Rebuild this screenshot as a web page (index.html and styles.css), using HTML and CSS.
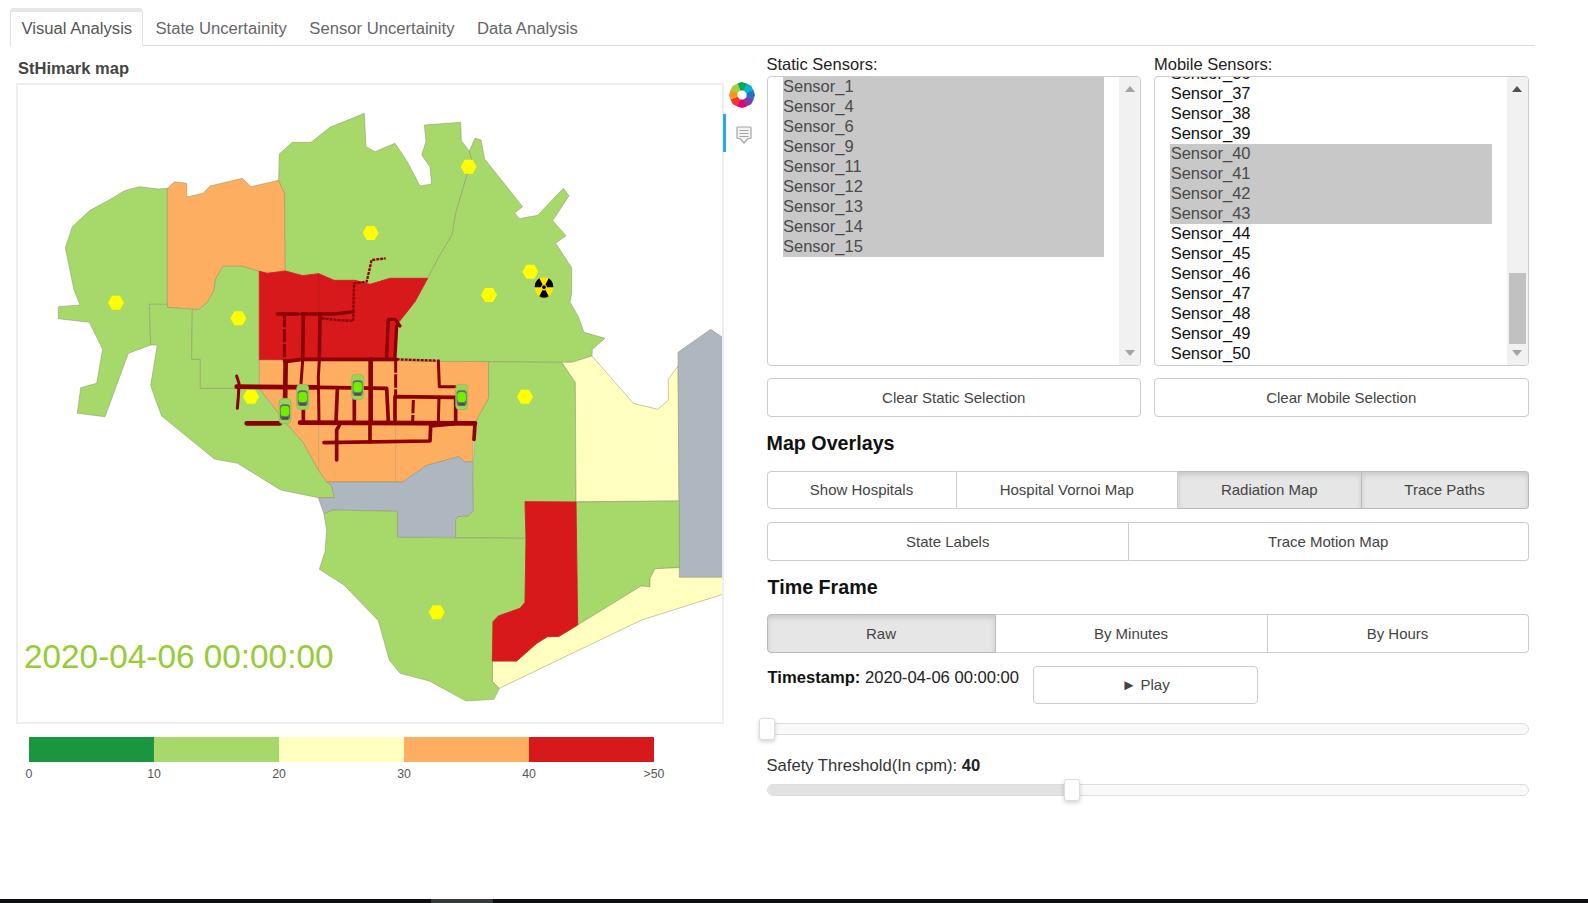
FILE: index.html
```html
<!DOCTYPE html>
<html lang="en">
<head>
<meta charset="utf-8">
<title>StHimark</title>
<link rel="stylesheet" href="styles.css">
</head>
<body>
<div class="page">
  <nav class="tabs">
    <a class="tab active">Visual Analysis</a>
    <a class="tab">State Uncertainity</a>
    <a class="tab">Sensor Uncertainity</a>
    <a class="tab">Data Analysis</a>
  </nav>
  <div class="content">
    <section class="left">
      <h4 class="map-title">StHimark map</h4>
      <div class="map-row">
        <div class="map-frame">
          <svg class="map" viewBox="54 255 2112 1911" width="704" height="637" xmlns="http://www.w3.org/2000/svg">
            <defs>
              <polygon id="hex" points="-24,0 -12,-21 12,-21 24,0 12,21 -12,21"/>
              <g id="car">
                <rect class="car-body" x="-18" y="-38" width="36" height="76" rx="12"/>
                <rect class="car-dark" x="-15" y="-20" width="30" height="47" rx="10"/>
                <rect class="car-lime" x="-13" y="-15" width="26" height="31" rx="10"/>
                <rect class="car-glass" x="-9" y="18" width="18" height="7" rx="2"/>
              </g>
              <path id="blade" d="M4 6.9L13 22.5A26 26 0 0 1-13 22.5L-4 6.9A8 8 0 0 0 4 6.9Z"/>
            </defs>
            <polygon class="r green" points="502,565 475,567 418,560 374,572 322,603 270,631 217,680 196,743 222,870 240,915 175,920 175,956 268,967 308,1048 290,1150 242,1163 232,1240 315,1250 385,1060 452,1035 448,913 502,913"/>
            <polygon class="r orange" points="502,565 524,545 560,550 560,591 609,580 630,558 727,535 753,560 836,541 854,580 856,813 802,820 778,814 727,799 669,799 647,837 642,872 622,907 597,928 577,928 502,922"/>
            <polygon class="r green" points="448,913 502,913 502,922 577,928 575,1077 601,1078 601,1165 778,1165 855,1265 910,1328 955,1410 995,1458 1003,1493 955,1493 842,1470 713,1390 643,1377 485,1248 467,1200 452,1156 472,1035 452,1035"/>
            <polygon class="r green" points="577,928 597,928 622,907 642,872 647,837 669,799 727,799 778,814 778,1165 601,1165 601,1078 575,1077"/>
            <polygon class="r green" points="838,462 877,427 933,427 990,382 1093,340 1098,440 1125,455 1185,430 1222,485 1260,558 1295,552 1290,500 1265,465 1278,425 1273,375 1382,367 1384,422 1408,453 1415,480 1402,522 1367,640 1357,703 1320,765 1283,835 1170,835 1110,853 1065,841 1002,841 956,821 908,827 856,813 854,580 836,541"/>
            <polygon class="r green" points="1425,415 1443,420 1454,477 1568,620 1544,638 1557,656 1613,646 1690,565 1707,587 1658,662 1698,707 1667,730 1715,803 1715,880 1710,906 1735,950 1752,997 1815,1015 1777,1048 1776,1068 1715,1087 1182,1085 1188,1040 1190,972 1200,962 1245,905 1283,835 1320,765 1357,703 1367,640 1402,522 1415,480 1408,453"/>
            <polygon class="r red" points="778,814 802,820 856,813 908,827 956,821 1002,841 1065,841 1110,853 1170,835 1283,835 1245,905 1200,962 1190,972 1182,1080 778,1080"/>
            <polygon class="r orange" points="778,1080 1466,1085 1466,1195 1432,1260 1420,1320 1418,1386 1395,1386 1375,1370 1278,1397 1208,1446 980,1446 955,1410 910,1328 855,1265 778,1165"/>
            <polygon class="r grey" points="955,1493 1003,1493 995,1458 980,1446 1208,1446 1278,1397 1375,1370 1395,1386 1418,1386 1420,1535 1405,1548 1375,1550 1367,1560 1367,1612 1192,1612 1192,1534 998,1530 972,1542"/>
            <polygon class="r green" points="1466,1085 1685,1087 1726,1147 1728,1505 1575,1505 1578,1615 1367,1613 1367,1560 1375,1550 1405,1548 1420,1533 1420,1386 1427,1265 1466,1195"/>
            <polygon class="r yellow" points="1685,1087 1715,1087 1776,1068 1900,1210 1973,1228 2005,1200 2005,1138 2034,1098 2038,1503 1728,1505 1726,1147"/>
            <polygon class="r grey" points="2034,1057 2132,988 2168,1012 2168,1732 2038,1732"/>
            <polygon class="r green" points="1728,1506 2038,1503 2038,1703 1965,1706 1950,1735 1950,1760 1923,1758 1733,1875"/>
            <polygon class="r yellow" points="1477,1983 1550,1983 1610,1930 1642,1910 1677,1909 1733,1875 1923,1758 1950,1760 1950,1735 1965,1706 2038,1703 2038,1732 2168,1732 2168,1783 1925,1860 1498,2065 1477,2045"/>
            <polygon class="r green" points="972,1542 998,1530 1192,1534 1192,1612 1578,1615 1575,1807 1560,1825 1495,1848 1479,1865 1477,1983 1477,2045 1498,2065 1482,2098 1398,2103 1288,2043 1200,2020 1168,1980 1135,1862 1032,1755 958,1708 975,1655 980,1590"/>
            <polygon class="r red" points="1575,1505 1728,1506 1733,1875 1677,1909 1642,1910 1610,1930 1550,1983 1477,1983 1479,1865 1495,1848 1560,1825 1575,1807 1578,1615"/>
            <path class="divider-red" d="M956 821V1080"/>
            <path class="divider" d="M956 1270V1410M1187 1270V1446"/>
            <use class="hex" href="#hex" x="348" y="908"/>
            <use class="hex" href="#hex" x="715" y="955"/>
            <use class="hex" href="#hex" x="1112" y="699"/>
            <use class="hex" href="#hex" x="1406" y="500"/>
            <use class="hex" href="#hex" x="1591" y="815"/>
            <use class="hex" href="#hex" x="1467" y="885"/>
            <use class="hex" href="#hex" x="1575" y="1190"/>
            <use class="hex" href="#hex" x="753" y="1190"/>
            <use class="hex" href="#hex" x="1310" y="1837"/>
            <g class="radiation" transform="translate(1632 862) scale(1.08 1.2)">
              <circle class="rad-disc" r="26"/>
              <use href="#blade"/>
              <use href="#blade" transform="rotate(120)"/>
              <use href="#blade" transform="rotate(240)"/>
              <circle r="5"/>
            </g>
            <g class="roads" transform="translate(660 720)">
              <path class="rd7" d="M172 222H235M245 222H345L400 215"/>
              <path class="rd-dash" d="M400 215L402 130L440 125L455 60L497 55"/>
              <path class="rd-dash" d="M305 235L350 240L400 243V215"/>
              <path class="rd-dash6" d="M193 222V365"/>
              <path class="rd8" d="M250 222L248 360M300 222L298 360"/>
              <path class="rd7" d="M500 350L505 238H525L540 258M530 258L525 350"/>
              <path class="rd8" d="M195 365L245 358H530"/>
              <path class="rd-dash" d="M530 358L650 362"/>
              <path class="rd6" d="M655 362L658 440H705"/>
              <path class="rd10" d="M197 365L195 500"/>
              <path class="rd6" d="M248 362L243 430M298 362L295 410L297 545"/>
              <path class="rd10" d="M452 358V545"/>
              <path class="rd-dash6" d="M527 358V465"/>
              <path class="rd10" d="M50 440L295 442"/>
              <path class="rd8" d="M295 442L500 445L505 545"/>
              <path class="rd6" d="M50 408L57 430L55 470L52 505"/>
              <path class="rd10" d="M80 550H180M240 548L765 550"/>
              <path class="rd8" d="M765 550L762 598"/>
              <path class="rd8" d="M525 545V470L705 472"/>
              <path class="rd-dash6" d="M580 480L578 545"/>
              <path class="rd6" d="M657 472L655 545"/>
              <path class="rd8" d="M707 472V548M250 505V548M352 450L348 545M403 445V550"/>
              <path class="rd8" d="M312 608L630 603L632 558L700 552"/>
              <path class="rd8" d="M350 660V570L358 556M450 550V605"/>
            </g>
            <use href="#car" x="855" y="1233"/>
            <use href="#car" x="908" y="1191"/>
            <use href="#car" x="1073" y="1161"/>
            <use href="#car" x="1385" y="1191"/>
            <text class="stamp" x="72" y="2003">2020-04-06 00:00:00</text>
          </svg>
        </div>
        <aside class="toolbar">
          <svg class="logo" viewBox="-13 -13 26 26" width="26" height="26" xmlns="http://www.w3.org/2000/svg">
            <defs><path id="petal" d="M-1.900-4.600L-4.800-11.500L0-13L5.200-11.200L2.200-4.400Z"/></defs>
            <use class="p1" href="#petal"/>
            <use class="p2" href="#petal" transform="rotate(45)"/>
            <use class="p3" href="#petal" transform="rotate(90)"/>
            <use class="p4" href="#petal" transform="rotate(135)"/>
            <use class="p5" href="#petal" transform="rotate(180)"/>
            <use class="p6" href="#petal" transform="rotate(225)"/>
            <use class="p7" href="#petal" transform="rotate(270)"/>
            <use class="p8" href="#petal" transform="rotate(315)"/>
          </svg>
          <div class="tool-active">
            <svg class="hover-icon" viewBox="0 0 16 18" width="16" height="18" xmlns="http://www.w3.org/2000/svg">
              <path class="hover-shape" d="M2 1h12a1 1 0 0 1 1 1v10l-3.500 1-3.500 4-3.500-4-3.500-1v-10a1 1 0 0 1 1-1z"/>
              <path class="hover-lines" d="M3.500 4.500h9M3.500 7.500h9M3.500 10.500h9"/>
            </svg>
          </div>
        </aside>
      </div>
      <div class="legend">
        <div class="legend-bar">
          <span class="seg s1"></span><span class="seg s2"></span><span class="seg s3"></span><span class="seg s4"></span><span class="seg s5"></span>
        </div>
        <div class="legend-labels">
          <span>0</span><span>10</span><span>20</span><span>30</span><span>40</span><span>&gt;50</span>
        </div>
      </div>
    </section>
    <section class="right">
      <div class="sensors">
        <div class="sensor-col">
          <label class="field-label">Static Sensors:</label>
          <div class="listbox">
            <div class="list">
              <div class="opt sel">Sensor_1</div>
              <div class="opt sel">Sensor_4</div>
              <div class="opt sel">Sensor_6</div>
              <div class="opt sel">Sensor_9</div>
              <div class="opt sel">Sensor_11</div>
              <div class="opt sel">Sensor_12</div>
              <div class="opt sel">Sensor_13</div>
              <div class="opt sel">Sensor_14</div>
              <div class="opt sel">Sensor_15</div>
            </div>
            <div class="scrollbar">
              <span class="arrow up off"></span>
              <span class="arrow down off"></span>
            </div>
          </div>
          <button class="btn clear">Clear Static Selection</button>
        </div>
        <div class="sensor-col">
          <label class="field-label">Mobile Sensors:</label>
          <div class="listbox">
            <div class="list scrolled">
              <div class="opt">Sensor_36</div>
              <div class="opt">Sensor_37</div>
              <div class="opt">Sensor_38</div>
              <div class="opt">Sensor_39</div>
              <div class="opt sel">Sensor_40</div>
              <div class="opt sel">Sensor_41</div>
              <div class="opt sel">Sensor_42</div>
              <div class="opt sel">Sensor_43</div>
              <div class="opt">Sensor_44</div>
              <div class="opt">Sensor_45</div>
              <div class="opt">Sensor_46</div>
              <div class="opt">Sensor_47</div>
              <div class="opt">Sensor_48</div>
              <div class="opt">Sensor_49</div>
              <div class="opt">Sensor_50</div>
            </div>
            <div class="scrollbar">
              <span class="arrow up"></span>
              <span class="thumb"></span>
              <span class="arrow down"></span>
            </div>
          </div>
          <button class="btn clear">Clear Mobile Selection</button>
        </div>
      </div>
      <h4 class="section-title overlays">Map Overlays</h4>
      <div class="group g1">
        <button class="btn">Show Hospitals</button>
        <button class="btn">Hospital Vornoi Map</button>
        <button class="btn on">Radiation Map</button>
        <button class="btn on">Trace Paths</button>
      </div>
      <div class="group g2">
        <button class="btn">State Labels</button>
        <button class="btn">Trace Motion Map</button>
      </div>
      <h4 class="section-title timeframe">Time Frame</h4>
      <div class="group g3">
        <button class="btn on">Raw</button>
        <button class="btn">By Minutes</button>
        <button class="btn">By Hours</button>
      </div>
      <div class="time-row">
        <div class="timestamp"><b>Timestamp:</b> 2020-04-06 00:00:00</div>
        <button class="btn play">► Play</button>
      </div>
      <div class="slider first"><span class="handle at-start"></span></div>
      <div class="threshold">Safety Threshold(In cpm): <b>40</b></div>
      <div class="slider"><span class="fill"></span><span class="handle at-40"></span></div>
    </section>
  </div>
  <div class="taskbar"><span class="task-item"></span></div>
</div>
</body>
</html>
```

FILE: styles.css
```css
* { box-sizing: border-box; }
html, body { margin: 0; padding: 0; background: #fff; }
body { font-family: "Liberation Sans", Arial, sans-serif; font-size: 16.6px; color: #222; }
.page { width: 1588px; height: 903px; overflow: hidden; display: flex; flex-direction: column; }

/* tabs */
.tabs { display: flex; height: 46px; margin-left: 10px; width: 1525px; padding-top: 8px; border-bottom: 1px solid #ddd; flex: none; }
.tab { height: 38px; padding: 0 11.250px; font-size: 16.650px; line-height: 42px; color: #666; }
.tab.active { padding: 0 10px 0 10.500px; margin-right: 1px; color: #555; background: #fff; border: 1px solid #e2e2e2; border-top: 4px solid #e6e6e6; border-bottom: 0; border-radius: 4px 4px 0 0; line-height: 33px; height: 38px; margin-bottom: -1px; }

.content { display: grid; grid-template-columns: 766.500px 762px; flex: none; }

/* left */
.left { padding: 12px 0 0 16px; }
.map-title { margin: 0 0 5px 2px; height: 20px; font-size: 16.500px; line-height: 20px; font-weight: bold; color: #444; }
.map-row { display: flex; }
.map-frame { width: 708px; height: 641px; border: 2px solid #eee; flex: none; overflow: hidden; }
.map { display: block; }
.r { stroke: #8f8f68; stroke-opacity: .6; stroke-width: 2.500; stroke-linejoin: round; }
.green { fill: #a6d96a; }
.orange { fill: #fdae61; }
.red { fill: #d7191c; stroke: #d7191c; stroke-opacity: 1; }
.yellow { fill: #ffffbf; }
.grey { fill: #aeb7c0; }
.divider { fill: none; stroke: #b09a70; stroke-width: 2; stroke-opacity: .8; }
.divider-red { fill: none; stroke: #b5171a; stroke-width: 2; }
.hex { fill: #ffff00; }
.radiation { fill: #000; }
.radiation .rad-disc { fill: #ffe600; }
.roads path { fill: none; stroke: #8b0000; stroke-linecap: round; stroke-linejoin: round; }
.roads .rd6 { stroke-width: 9; }
.roads .rd7 { stroke-width: 10; }
.roads .rd8 { stroke-width: 11; }
.roads .rd10 { stroke-width: 14; }
.roads .rd-dash { stroke-width: 7; stroke-dasharray: 9 3; stroke-linecap: butt; }
.roads .rd-dash6 { stroke-width: 9; stroke-dasharray: 40 5; stroke-linecap: butt; }
.car-body { fill: #9ad35a; stroke: #86bb50; stroke-width: 2; }
.car-dark { fill: #666b6e; }
.car-lime { fill: #70ee00; }
.car-glass { fill: #4d5052; }
.stamp { font-family: "Liberation Sans", Arial, sans-serif; font-size: 100px; fill: #97cb37; }

.toolbar { width: 36px; flex: none; display: flex; flex-direction: column; }
.logo { display: block; margin: -1px 0 0 5px; }
.tool-active { width: 36px; height: 38px; margin-top: 6px; border-left: 3px solid #26aae1; padding: 12px 0 0 10px; margin-left: -1px; }
.hover-icon { display: block; }
.hover-shape { fill: #f4f4f4; stroke: #a4a4a4; stroke-width: 1.200; }
.hover-lines { fill: none; stroke: #a4a4a4; stroke-width: 1; }
.p1 { fill: #00a651; }
.p2 { fill: #00b5d8; }
.p3 { fill: #2a6fc0; }
.p4 { fill: #7b3fa0; }
.p5 { fill: #e6007e; }
.p6 { fill: #ee3a2c; }
.p7 { fill: #f7941e; }
.p8 { fill: #a6ce39; }

.legend { margin: 13px 0 0 13px; }
.legend-bar { display: flex; height: 25px; }
.seg { width: 125px; flex: none; }
.s1 { background: #1a9641; }
.s2 { background: #a6d96a; }
.s3 { background: #ffffbf; }
.s4 { background: #fdae61; }
.s5 { background: #d7191c; }
.legend-labels { display: flex; margin: 4px 0 0 -62.500px; font-size: 12.300px; line-height: 16px; color: #555; }
.legend-labels span { width: 125px; flex: none; text-align: center; }

/* right */
.right { padding-top: 8px; }
.sensors { display: grid; grid-template-columns: 374.500px 374.500px; column-gap: 13px; }
.field-label { display: block; height: 20px; margin-bottom: 2px; line-height: 20px; color: #222; font-size: 16.500px; }
.listbox { display: flex; height: 290px; border: 1px solid #ccc; border-radius: 4px; overflow: hidden; background: #fff; }
.list { flex: 1; padding: 0 15.500px; overflow: hidden; color: #111; }
.list.scrolled { padding: 0 15px; }
.list.scrolled > .opt:first-child { margin-top: -13px; }
.list.scrolled > .opt { padding-left: .7px; }
.opt { height: 20px; line-height: 18px; font-size: 16.500px; }
.opt.sel { background: #c8c8c8; color: #4a4a4a; }
.scrollbar { width: 21px; flex: none; background: #f1f1f1; display: flex; flex-direction: column; align-items: center; padding: 9px 0 9px; position: relative; }
.arrow { width: 0; height: 0; border-left: 5px solid transparent; border-right: 5px solid transparent; flex: none; }
.arrow.up { border-bottom: 6px solid #505050; }
.arrow.down { border-top: 6px solid #a3a3a3; margin-top: auto; }
.arrow.up.off { border-bottom-color: #a3a3a3; }
.thumb { position: absolute; left: 2px; top: 196px; width: 17px; height: 71px; background: #c1c1c1; }

.btn { display: block; margin: 0; padding: 0; background: #fff; border: 1px solid #ccc; border-radius: 4px; font-family: "Liberation Sans", Arial, sans-serif; font-size: 15px; color: #444; text-align: center; }
.btn.clear { width: 100%; height: 39px; margin-top: 12px; }

.section-title { margin: 0; height: 24px; font-size: 19.700px; line-height: 24px; font-weight: bold; color: #111; }
.section-title.overlays { margin-top: 14px; }
.section-title.timeframe { margin: 14px 0 0 1px; }

.group { display: grid; }
.group .btn { border-radius: 0; border-left-width: 0; height: 100%; }
.group .btn:first-child { border-left-width: 1px; border-radius: 4px 0 0 4px; }
.group .btn:last-child { border-radius: 0 4px 4px 0; }
.group .btn.on { background: #e6e6e6; border-color: #bbb; box-shadow: inset 0 3px 5px rgba(0, 0, 0, .125); }
.g1 { height: 38px; margin-top: 16px; grid-template-columns: 190px 221.500px 183.500px 167px; }
.g1 .btn { padding-bottom: 2px; }
.g2 { height: 39px; margin-top: 13px; grid-template-columns: 362.500px 399.500px; }
.g3 { height: 39px; margin-top: 15px; grid-template-columns: 229px 272px 261px; }

.time-row { display: flex; align-items: flex-start; margin-top: 13px; padding-left: 1px; }
.timestamp { margin-top: 2px; height: 20px; line-height: 20px; color: #222; }
.timestamp b { color: #111; }
.btn.play { width: 225px; height: 38px; margin-left: 14px; padding-bottom: 2px; }

.slider { position: relative; height: 12px; margin-top: 8px; background: #f9f9f9; border: 1px solid #ddd; border-radius: 6px; }
.slider.first { margin-top: 19px; }
.fill { display: block; width: 304px; height: 10px; background: #e2e2e2; border-radius: 5px 0 0 5px; }
.handle { position: absolute; top: -6px; width: 16px; height: 22px; background: #fff; border: 1px solid #ddd; border-radius: 3px; box-shadow: 0 2px 4px rgba(0, 0, 0, .18); }
.handle.at-start { left: -9px; }
.handle.at-40 { left: 296px; }
.threshold { margin-top: 21px; height: 20px; line-height: 20px; color: #333; }
.threshold b { color: #222; }

.taskbar { margin-top: auto; height: 4px; background: #0a0f10; flex: none; padding-left: 431px; }
.task-item { display: block; width: 62px; height: 4px; background: #333a3c; }
```
